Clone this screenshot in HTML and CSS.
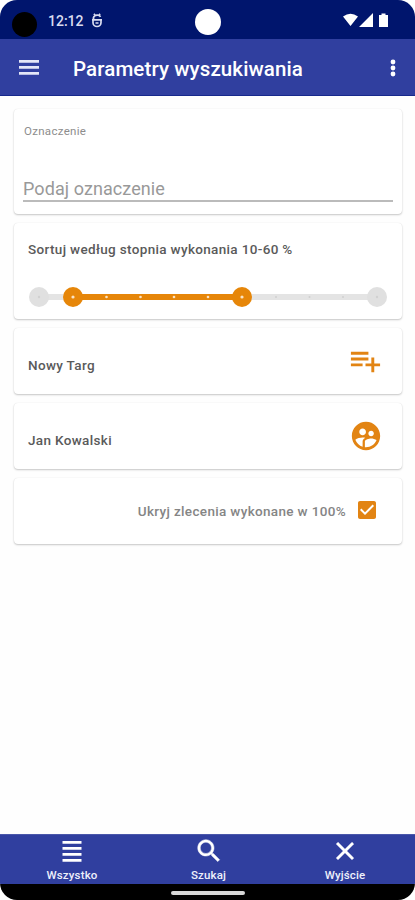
FILE: index.html
```html
<!DOCTYPE html>
<html lang="pl">
<head>
<meta charset="utf-8">
<title>Parametry wyszukiwania</title>
<link rel="stylesheet" href="styles.css">
</head>
<body>
<div class="screen">
  <div class="status">
    <span class="hole"></span>
    <span class="time">12:12</span>
    <svg class="debug" viewBox="0 0 12 15" fill="none" stroke="#d9dcf0" stroke-width="1.7"><path d="M9.500 3.800C8.500 1.500 3.500 1.500 2.500 4.500c-.4 1.500 0 2 1 2.300M1 6.800h10M2 6.800v3a4 3.700 0 0 0 8 0v-3M4.500 10h3M3 .8l1 1.500M9 .8 8 2.300"/></svg>
    <span class="camera"></span>
    <svg class="signals" viewBox="0 0 46 15" fill="#fff"><path d="M0 3.500Q7.500-1.800 15 3.500L7.500 13zM16 14 30 0v14zM36 2h2.500V.500h4V2H45v12h-9z"/></svg>
  </div>
  <header class="appbar">
    <svg class="menu" viewBox="0 0 20 15" fill="#e3e6f7"><path d="M0 0h20v2.700H0zM0 6h20v2.700H0zM0 12h20v2.700H0z"/></svg>
    <h1>Parametry wyszukiwania</h1>
    <svg class="more" viewBox="0 0 6 18" fill="#fff"><circle cx="3" cy="3" r="2.400"/><circle cx="3" cy="9" r="2.400"/><circle cx="3" cy="15" r="2.400"/></svg>
  </header>
  <main>
    <section class="card field">
      <label for="mark">Oznaczenie</label>
      <input id="mark" type="text" placeholder="Podaj oznaczenie">
    </section>
    <section class="card sort">
      <p class="name">Sortuj według stopnia wykonania 10-60 %</p>
      <svg class="slider" viewBox="0 0 360 20">
        <path d="M11 10h338" stroke="#e4e4e4" stroke-width="6"/>
        <path d="M45 10h169" stroke="#e68609" stroke-width="6"/>
        <g fill="#e0e0e0"><circle cx="11" cy="10" r="10"/><circle cx="349" cy="10" r="10"/></g>
        <g fill="#e68609"><circle cx="45" cy="10" r="10"/><circle cx="214" cy="10" r="10"/></g>
        <g fill="#fbe3c4"><circle cx="45" cy="10" r="1.600"/><circle cx="78.500" cy="10" r="1.300"/><circle cx="112.500" cy="10" r="1.300"/><circle cx="146" cy="10" r="1.300"/><circle cx="180" cy="10" r="1.300"/><circle cx="214" cy="10" r="1.600"/></g>
        <g fill="#d0d0d0"><circle cx="11" cy="10" r="1.200"/><circle cx="248" cy="10" r="1"/><circle cx="281.500" cy="10" r="1"/><circle cx="315" cy="10" r="1"/><circle cx="349" cy="10" r="1.200"/></g>
      </svg>
    </section>
    <section class="card row">
      <p class="name">Nowy Targ</p>
      <svg class="add" viewBox="0 0 24 24"><path d="M14 10H2v2h12zm0-4H2v2h12zm4 8v-4h-2v4h-4v2h4v4h2v-4h4v-2zM2 16h8v-2H2z"/></svg>
    </section>
    <section class="card row">
      <p class="name">Jan Kowalski</p>
      <svg class="people" viewBox="0 0 24 24"><path d="M12 2C6.480 2 2 6.480 2 12s4.480 10 10 10 10-4.480 10-10S17.520 2 12 2zm3.610 6.340c1.070 0 1.930.860 1.930 1.930 0 1.070-.860 1.930-1.930 1.930-1.070 0-1.930-.860-1.930-1.930-.010-1.070.860-1.930 1.930-1.930zm-6-1.580c1.300 0 2.360 1.060 2.360 2.360 0 1.300-1.060 2.360-2.360 2.360s-2.360-1.060-2.360-2.360c0-1.310 1.050-2.360 2.360-2.360zm0 9.130v3.750c-2.400-.750-4.300-2.600-5.140-4.960 1.050-1.120 3.670-1.690 5.140-1.690.530 0 1.200.080 1.900.220-1.640.870-1.900 2.020-1.900 2.680zM12 20c-.270 0-.530-.010-.790-.040v-4.070c0-1.420 2.940-2.130 4.400-2.130 1.070 0 2.920.390 3.840 1.150-1.170 2.970-4.060 5.090-7.450 5.090z"/></svg>
    </section>
    <section class="card row hide">
      <p class="name">Ukryj zlecenia wykonane w 100%</p>
      <svg class="check" viewBox="0 0 24 24"><path d="M19 3H5c-1.110 0-2 .900-2 2v14c0 1.100.890 2 2 2h14c1.110 0 2-.900 2-2V5c0-1.100-.890-2-2-2zm-9 14l-5-5 1.410-1.410L10 14.170l7.590-7.590L19 8l-9 9z"/></svg>
    </section>
  </main>
  <nav>
    <a><svg viewBox="0 0 30 30"><path d="M5.500 5h19v2.700h-19zM5.500 11h19v2.700h-19zM5.500 17h19v2.700h-19zM5.500 23h19v2.700h-19z"/></svg><span>Wszystko</span></a>
    <a><svg class="bold" viewBox="0 0 24 24"><path d="M15.500 14h-.790l-.280-.270C15.410 12.590 16 11.110 16 9.500 16 5.910 13.090 3 9.500 3S3 5.910 3 9.500 5.910 16 9.500 16c1.610 0 3.090-.590 4.230-1.570l.270.280v.790l5 4.990L20.490 19l-4.990-5zm-6 0C7.010 14 5 11.990 5 9.500S7.010 5 9.500 5 14 7.010 14 9.500 11.990 14 9.500 14z"/></svg><span>Szukaj</span></a>
    <a><svg class="bold" viewBox="0 0 24 24"><path d="M19 6.410 17.590 5 12 10.590 6.410 5 5 6.410 10.590 12 5 17.590 6.410 19 12 13.410 17.590 19 19 17.590 13.410 12z"/></svg><span>Wyjście</span></a>
  </nav>
  <footer><span></span></footer>
</div>
</body>
</html>
```
FILE: styles.css
```css
* { box-sizing: border-box; }
body { margin: 0; background: #fff; font-family: Roboto, "Liberation Sans", sans-serif; }
h1, p { margin: 0; }
svg { display: block; flex: none; }
.screen { width: 415px; height: 900px; display: flex; flex-direction: column; overflow: hidden; border-radius: 17px; background: #fefefe; }

.status { height: 39px; flex: none; background: #00156d; display: flex; align-items: flex-start; }
.hole { width: 25px; height: 25px; border-radius: 50%; background: #000; margin: 12px 0 0 12px; }
.time { width: 35px; margin: 12px 0 0 11px; font-size: 14px; line-height: 18px; font-weight: 500; color: #d9dcf0; white-space: nowrap; }
.debug { width: 12px; height: 15px; margin: 13px 0 0 8px; }
.camera { width: 26px; height: 26px; border-radius: 50%; background: #fff; margin: 9px 0 0 92px; }
.signals { width: 46px; height: 15px; margin: 13px 0 0 122px; }

.appbar { height: 57px; flex: none; background: #303f9f; border-bottom: 1px solid #17298c; display: flex; align-items: center; padding: 0 19px; }
.menu { width: 20px; height: 15px; margin-top: 1px; }
h1 { flex: 1; margin: 4px 0 0 34px; font-size: 20.500px; line-height: 26px; font-weight: 500; letter-spacing: .11px; color: #fff; white-space: nowrap; }
.more { width: 6px; height: 18px; margin-top: 2px; }

main { flex: 1; display: flex; flex-direction: column; gap: 9px; padding: 13px 13px 0 14px; }
.card { height: 66px; background: #fff; border-radius: 4px; box-shadow: 0 1px 2px rgba(0,0,0,.22), 0 0 1px rgba(0,0,0,.10); }
.field { height: 105px; padding: 15px 9px 0; display: flex; flex-direction: column; }
.field label { font-size: 11.500px; line-height: 14px; letter-spacing: .3px; color: #8d8d8d; padding-left: 1px; }
.field input { height: 28px; margin-top: 36px; padding: 2px 0 0; border: 0; border-bottom: 2px solid #bbb; background: none; outline: 0; font: 18px/24px Roboto, sans-serif; letter-spacing: .08px; color: #444; }
.field input::placeholder { color: #999; opacity: 1; }
.sort { height: 96px; padding: 16px 14px 0; }
.name { font-size: 13.500px; line-height: 20px; font-weight: 500; letter-spacing: .34px; color: #5a5a5a; white-space: nowrap; }
.slider { width: 360px; height: 20px; margin-top: 28px; }
.row { display: flex; align-items: flex-start; justify-content: space-between; padding: 0 19px 0 14px; }
.row .name { margin-top: 27px; }
.row svg { fill: #e28413; }
.add { width: 35px; height: 35px; margin: 15px 0 0; }
.people { width: 34px; height: 34px; margin: 16px 0 0; }
.hide { justify-content: flex-end; padding-right: 23px; gap: 9px; }
.hide .name { margin-top: 23px; color: #858585; }
.check { width: 24px; height: 24px; margin-top: 20px; }

nav { height: 50px; flex: none; background: #303f9f; display: grid; grid-template-columns: 136px 137px 136px; padding: 0 2px 0 4px; border-top: 1px solid #4a57aa; }
nav a { display: flex; flex-direction: column; align-items: center; color: #eef0fb; font-size: 11.500px; line-height: 14px; font-weight: 500; letter-spacing: .15px; }
nav svg { width: 30px; height: 30px; margin: 1px 0 2px; fill: #fff; }
nav .bold { stroke: #fff; stroke-width: .4; }
footer { height: 16px; flex: none; background: #000; display: flex; justify-content: center; padding-top: 7px; }
footer span { width: 74px; height: 4px; border-radius: 2px; background: #d8d8d8; }
```
